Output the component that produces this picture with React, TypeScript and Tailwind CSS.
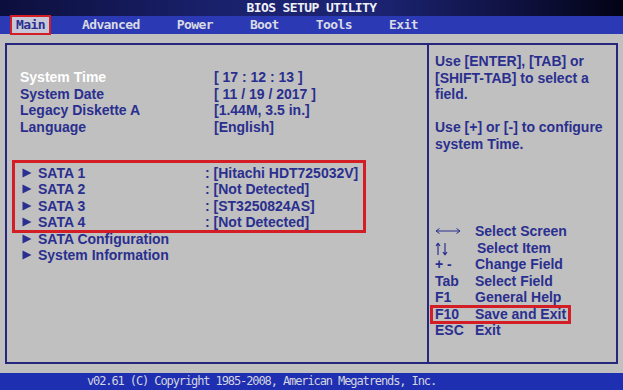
const MENU = ['Main', 'Advanced', 'Power', 'Boot', 'Tools', 'Exit'];

const SYSTEM_ROWS = [
  { label: 'System Time', value: '[ 17 : 12 : 13 ]', active: true },
  { label: 'System Date', value: '[ 11 / 19 / 2017 ]' },
  { label: 'Legacy Diskette A', value: '[1.44M, 3.5 in.]' },
  { label: 'Language', value: '[English]' },
];

const SATA_ROWS = [
  { label: 'SATA 1', value: ': [Hitachi HDT725032V]' },
  { label: 'SATA 2', value: ': [Not Detected]' },
  { label: 'SATA 3', value: ': [ST3250824AS]' },
  { label: 'SATA 4', value: ': [Not Detected]' },
];

const KEYS = [
  { key: 'arrows-lr', desc: 'Select Screen' },
  { key: 'arrows-ud', desc: 'Select Item' },
  { key: '+ -', desc: 'Change Field' },
  { key: 'Tab', desc: 'Select Field' },
  { key: 'F1', desc: 'General Help' },
  { key: 'F10', desc: 'Save and Exit', boxed: true },
  { key: 'ESC', desc: 'Exit' },
];

function Arrow() {
  return (
    <span className="w-[16px] flex items-center">
      <svg width="10" height="10" viewBox="0 0 10 10">
        <path d="M0.5 0.5L9.5 5L0.5 9.5Z" fill="#2a2f8f" />
      </svg>
    </span>
  );
}

function KeyGlyph({ k }: { k: string }) {
  if (k === 'arrows-lr') {
    return (
      <svg width="26" height="10" viewBox="0 0 26 10" className="mt-[3px]">
        <path d="M1 5H25M1 5L4.5 2.5M1 5L4.5 7.5M25 5L21.5 2.5M25 5L21.5 7.5" stroke="#2a2f8f" strokeWidth="1" fill="none" />
      </svg>
    );
  }
  if (k === 'arrows-ud') {
    return (
      <svg width="14" height="14" viewBox="0 0 14 14" className="mt-[2px]">
        <path d="M3 13V1M3 1L1 4M3 1L5 4M10 1V13M10 13L8 10M10 13L12 10" stroke="#2a2f8f" strokeWidth="1.2" fill="none" />
      </svg>
    );
  }
  return <span>{k}</span>;
}

export default function App() {
  return (
    <div className="w-[623px] h-[390px] bg-[#c0c0c0] flex flex-col overflow-hidden font-['Liberation_Sans',Arial,sans-serif] text-[14px] font-bold text-[#2a2f8f]">
      {/* title */}
      <div className="h-[16px] shrink-0 flex justify-center items-center bg-[linear-gradient(90deg,#0c0f3c_0%,#1a216c_35%,#1c2474_60%,#0b0d33_88%,#020314_100%)] font-['DejaVu_Sans_Mono',monospace] text-[13px] tracking-[-0.6px] leading-[16px] text-[#eef0f6]">
        BIOS SETUP UTILITY
      </div>

      {/* menu */}
      <div className="h-[18px] shrink-0 flex items-center gap-[37px] pl-[16px] bg-[#2b3ab4] font-['DejaVu_Sans_Mono',monospace] font-bold text-[13px] tracking-[-0.6px] leading-[18px] text-[#d8d9e4]">
        {MENU.map((m, i) =>
          i === 0 ? (
            <span key={m} className="-mx-[6px] -my-[1px] px-[4px] h-[20px] flex items-center border-2 border-[#d21e24] bg-[#c6c7d8] text-[#2a2f8f]">
              {m}
            </span>
          ) : (
            <span key={m}>{m}</span>
          )
        )}
      </div>

      {/* body */}
      <div className="flex-1 px-[5px] pt-[9px] pb-[9px]">
        <div className="h-full flex border-2 border-[#26267c]">
          <div className="w-[422px] shrink-0 pl-[13px] pt-[24px] border-r-2 border-[#26267c] leading-[16.5px]">
            {SYSTEM_ROWS.map((r) => (
              <div key={r.label} className="flex">
                <span className={`w-[194px] ${r.active ? 'text-white' : ''}`}>{r.label}</span>
                <span>{r.value}</span>
              </div>
            ))}

            <div className="relative mt-[29.5px] pl-[2px]">
              <div className="absolute -top-[5px] -bottom-[2px] -left-[8px] w-[354px] border-[3px] border-[#d21e24]" />
              {SATA_ROWS.map((r) => (
                <div key={r.label} className="flex">
                  <Arrow />
                  <span className="w-[167px]">{r.label}</span>
                  <span>{r.value}</span>
                </div>
              ))}
            </div>
            <div className="pl-[2px]">
              {['SATA Configuration', 'System Information'].map((l) => (
                <div key={l} className="flex">
                  <Arrow />
                  <span>{l}</span>
                </div>
              ))}
            </div>
          </div>

          <div className="flex-1 pl-[6px] pt-[8px] leading-[16.5px]">
            <div>Use [ENTER], [TAB] or</div>
            <div>[SHIFT-TAB] to select a</div>
            <div>field.</div>
            <div className="mt-[16.5px]">Use [+] or [-] to configure</div>
            <div>system Time.</div>

            <div className="mt-[71px]">
              {KEYS.map((k) => (
                <div key={k.key} className="relative flex">
                  {k.boxed && (
                    <div className="absolute -top-[1px] -bottom-[2px] -left-[5px] w-[141px] border-[3px] border-[#d21e24]" />
                  )}
                  <span className="w-[40px] flex">
                    <KeyGlyph k={k.key} />
                  </span>
                  <span className={k.key === 'arrows-ud' ? 'pl-[2px]' : ''}>{k.desc}</span>
                </div>
              ))}
            </div>
          </div>
        </div>
      </div>

      {/* footer */}
      <div className="h-[17px] shrink-0 pl-[87px] bg-[#1f2fb2] font-['DejaVu_Sans_Mono',monospace] font-normal text-[12px] tracking-[-1.1px] leading-[17px] text-[#d4d5de]">
        v02.61 (C) Copyright 1985-2008, American Megatrends, Inc.
      </div>
    </div>
  );
}
